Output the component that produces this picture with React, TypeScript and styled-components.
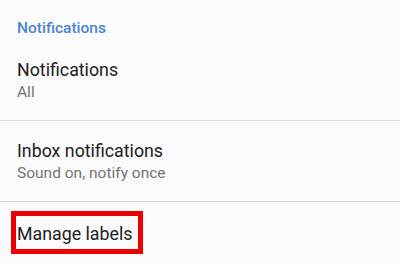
import React from 'react'
import styled, { createGlobalStyle } from 'styled-components'

const GlobalStyle = createGlobalStyle`
  html, body {
    margin: 0;
    padding: 0;
    background: #fafafa;
  }
  body {
    font-family: Roboto, "Noto Sans", "Liberation Sans", sans-serif;
    -webkit-font-smoothing: antialiased;
  }
`

const Screen = styled.div`
  width: 400px;
  height: 263px;
  overflow: hidden;
  background: #fafafa;
  display: flex;
  flex-direction: column;
`

const SectionHeader = styled.div`
  padding: 18px 17px 0;
  margin-bottom: 1.7px;
  font-size: 15.5px;
  line-height: 20px;
  font-weight: 500;
  color: #4b86cc;
`

const Item = styled.div<{ $last?: boolean }>`
  display: flex;
  flex-direction: column;
  padding: ${(p) => (p.$last ? '8.7px 0 0 11px' : '18.5px 17px 18.3px')};
  border-bottom: ${(p) => (p.$last ? 'none' : '1px solid #dcdcdc')};
`

const Title = styled.div`
  font-size: 17.8px;
  line-height: 23.5px;
  color: #212121;
`

const Summary = styled.div`
  font-size: 15.5px;
  line-height: 20px;
  color: #757575;
`

const Highlight = styled.div`
  align-self: flex-start;
  border: 5px solid #ec0000;
  padding: 6.2px 6px 3.3px 1px;
`

export default function App() {
  return (
    <>
      <GlobalStyle />
      <Screen>
        <SectionHeader>Notifications</SectionHeader>
        <Item>
          <Title>Notifications</Title>
          <Summary>All</Summary>
        </Item>
        <Item>
          <Title>Inbox notifications</Title>
          <Summary>Sound on, notify once</Summary>
        </Item>
        <Item $last>
          <Highlight>
            <Title>Manage labels</Title>
          </Highlight>
        </Item>
      </Screen>
    </>
  )
}
